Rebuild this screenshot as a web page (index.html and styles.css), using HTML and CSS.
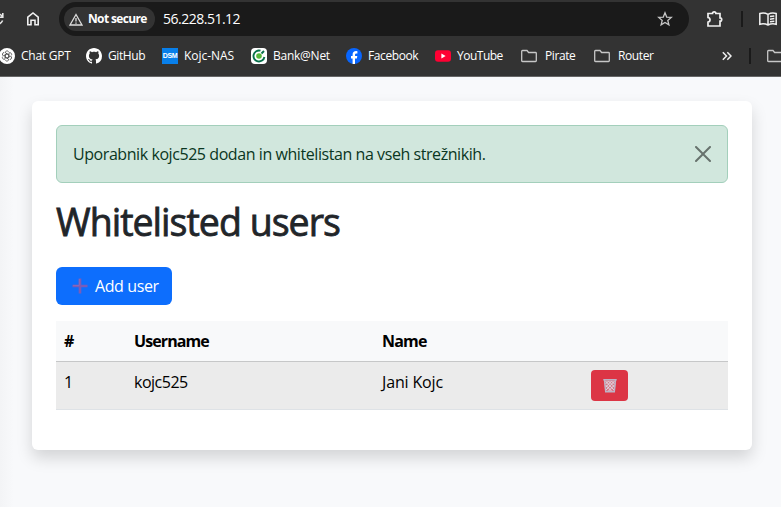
FILE: index.html
```html
<!DOCTYPE html>
<html lang="sl">
<head>
<meta charset="utf-8">
<title>Whitelisted users</title>
<link rel="stylesheet" href="styles.css">
</head>
<body>
<header class="browser">
  <div class="toolbar">
    <svg class="reload" width="6" height="16" viewBox="0 0 6 16" fill="none" stroke="#e8e8e8" stroke-width="1.6"><path d="M-2 3Q1 3 2.600 6M2.800 2v4.300H-1M2.600 9.500Q1 13 -2 13"/></svg>
    <svg class="home" width="14" height="16" viewBox="0 0 14 16" fill="none" stroke="#f0f0f0" stroke-width="1.6"><path d="M1.800 6.200L7 2l5.200 4.200v7.600H9V9.200H5v4.600H1.800z"/></svg>
    <div class="address">
      <div class="chip">
        <svg width="14" height="13" viewBox="0 0 14 13" fill="none" stroke="#dedede" stroke-width="1.3"><path d="M7 1.500L13 12H1z"/><path d="M7 5v3.500M7 9.500v1.300"/></svg>
        <span class="chip-label">Not secure</span>
      </div>
      <span class="url">56.228.51.12</span>
      <svg class="star" width="16" height="16" viewBox="0 0 16 16" fill="none" stroke="#c7c7c7" stroke-width="1.3"><path d="M8 1.800l1.700 4.300 4.600.3-3.500 3 1.100 4.500L8 11.400l-3.900 2.500 1.100-4.500-3.500-3 4.600-.3z"/></svg>
    </div>
    <svg class="puzzle" width="18" height="18" viewBox="0 0 18 18" fill="none" stroke="#f0f0f0" stroke-width="1.700"><path d="M2 3.500h4.500a1.700 1.700 0 0 1 3.400 0H14v4.300a1.700 1.700 0 0 1 0 3.400V16H2v-3.800c2.700-.4 2.700-4.300 0-4.700z"/></svg>
    <span class="divider"></span>
    <svg class="book" width="18" height="16" viewBox="0 0 18 16" fill="none" stroke="#f0f0f0" stroke-width="1.500"><path d="M9 3.300Q5 1 .8 2.500v10.800Q5 12 9 14q4-2 8.200-.7V2.500Q13 1 9 3.300zM9 3.300V14M11 5.600l4.300-.6M11 8.200l4.300-.6M11 10.800l4.300-.6"/></svg>
  </div>
  <nav class="bookmarks">
    <a class="bookmark"><svg width="16" height="16" viewBox="0 0 16 16"><circle cx="8" cy="8" r="8" fill="#fff"/><g fill="none" stroke="#333" stroke-width=".8" transform="translate(1.200 1.200) scale(.85)"><path id="k" d="M7.900 5.600L5.700 6.900v4.800a2.200 2.200 0 0 1-3-2.900"/><use href="#k" transform="rotate(60 8 8)"/><use href="#k" transform="rotate(120 8 8)"/><use href="#k" transform="rotate(180 8 8)"/><use href="#k" transform="rotate(240 8 8)"/><use href="#k" transform="rotate(300 8 8)"/></g></svg><span class="label chat">Chat GPT</span></a>
    <a class="bookmark"><svg width="16" height="16" viewBox="0 0 16 16" fill="#fff"><path d="M8 0C3.580 0 0 3.580 0 8c0 3.540 2.290 6.530 5.470 7.590.4.070.55-.17.55-.38 0-.19-.01-.82-.01-1.490-2.010.37-2.530-.49-2.690-.94-.09-.23-.48-.94-.82-1.130-.28-.15-.68-.52-.01-.53.63-.01 1.080.58 1.230.82.72 1.210 1.870.87 2.330.66.07-.52.28-.87.51-1.070-1.780-.2-3.640-.89-3.640-3.950 0-.87.31-1.590.82-2.150-.08-.2-.36-1.020.08-2.120 0 0 .67-.21 2.200.82.64-.18 1.320-.27 2-.27s1.360.09 2 .27c1.530-1.040 2.200-.82 2.200-.82.44 1.100.16 1.920.08 2.120.51.56.82 1.270.82 2.150 0 3.070-1.870 3.750-3.650 3.950.29.25.54.73.54 1.480 0 1.070-.01 1.930-.01 2.200 0 .21.15.46.55.38A8.010 8.010 0 0 0 16 8c0-4.420-3.580-8-8-8z"/></svg><span class="label git">GitHub</span></a>
    <a class="bookmark"><span class="dsm">DSM</span><span class="label nas">Kojc-NAS</span></a>
    <a class="bookmark"><svg width="16" height="16" viewBox="0 0 16 16" fill="none"><rect width="16" height="16" rx="4" fill="#fff"/><path d="M9.500 2.700A5.500 5.500 0 1 0 13.400 9" stroke="#07704a" stroke-width="1.900"/><circle cx="8" cy="8" r="2.800" fill="#56b83b"/><path d="M10.500 5.500l2.500-2.500" stroke="#07704a" stroke-width="2"/></svg><span class="label bank">Bank@Net</span></a>
    <a class="bookmark"><svg width="16" height="16" viewBox="0 0 16 16"><circle cx="8" cy="8" r="8" fill="#0866ff"/><path d="M6.600 16v-5.500H5V8h1.600V6.800c0-2.600 1.200-3.700 3.700-3.700l1.100.1v2.200h-.9c-1.200 0-1.500.5-1.500 1.500V8h2.300l-.4 2.500H9V16z" fill="#fff"/></svg><span class="label face">Facebook</span></a>
    <a class="bookmark"><svg width="16" height="16" viewBox="0 0 16 16"><rect y="2.300" width="16" height="11.400" rx="3" fill="#ff0033"/><path d="M6.400 5.600v4.800L10.600 8z" fill="#fff"/></svg><span class="label tube">YouTube</span></a>
    <a class="bookmark folder"><svg width="16" height="14" viewBox="0 0 16 14" fill="none" stroke="#c7c7c7" stroke-width="1.300"><path d="M.7 11V2.200Q.7 1.500 1.500 1.500H6l1.600 2h6.900q.8 0 .8.800V11.700q0 .8-.8.800H1.500q-.8 0-.8-.8z"/></svg><span class="label pirate">Pirate</span></a>
    <a class="bookmark folder"><svg width="16" height="14" viewBox="0 0 16 14" fill="none" stroke="#c7c7c7" stroke-width="1.300"><path d="M.7 11V2.200Q.7 1.500 1.500 1.500H6l1.600 2h6.900q.8 0 .8.800V11.700q0 .8-.8.800H1.500q-.8 0-.8-.8z"/></svg><span class="label router">Router</span></a>
    <svg class="more" width="10" height="10" viewBox="0 0 10 10" fill="none" stroke="#f0f0f0" stroke-width="1.500"><path d="M.8 1.200L4.500 5 .8 8.800M5.300 1.200L9 5 5.300 8.800"/></svg>
    <span class="divider low"></span>
    <svg class="all" width="16" height="14" viewBox="0 0 16 14" fill="none" stroke="#c7c7c7" stroke-width="1.300"><path d="M.7 11V2.200Q.7 1.500 1.500 1.500H6l1.600 2h6.900q.8 0 .8.800V11.700q0 .8-.8.800H1.500q-.8 0-.8-.8z"/></svg>
  </nav>
</header>
<main class="page">
  <section class="card">
    <div class="alert">
      <span class="alert-text">Uporabnik kojc525 dodan in whitelistan na vseh strežnikih.</span>
      <svg class="close" width="16" height="16" viewBox="0 0 16 16"><path d="M.293.293a1 1 0 0 1 1.414 0L8 6.586 14.293.293a1 1 0 1 1 1.414 1.414L9.414 8l6.293 6.293a1 1 0 0 1-1.414 1.414L8 9.414l-6.293 6.293a1 1 0 0 1-1.414-1.414L6.586 8 .293 1.707a1 1 0 0 1 0-1.414z"/></svg>
    </div>
    <h1><span class="title">Whitelisted users</span></h1>
    <button class="add"><svg width="16" height="16" viewBox="0 0 16 16"><path d="M8 .5v15M.5 8h15" stroke="#7a5cb8" stroke-width="2.600"/><path d="M7.300 1v6.400H1" fill="none" stroke="#956bb5" stroke-width=".8"/></svg><span class="add-text">Add user</span></button>
    <table>
      <colgroup><col class="c1"><col class="c2"><col class="c3"><col></colgroup>
      <thead><tr><th>#</th><th><span class="th-user">Username</span></th><th><span class="th-name">Name</span></th><th></th></tr></thead>
      <tbody><tr><td>1</td><td><span class="td-user">kojc525</span></td><td><span class="td-name">Jani Kojc</span></td><td><button class="delete" aria-label="Delete"><svg width="14" height="15" viewBox="0 0 14 15"><path d="M.8 1.500h12.400L11.700 14H2.300z" fill="#d6798a"/><path d="M2.500 3l8.500 9M5.500 3l6 6M8.500 3l3.500 3.500M2.500 7l6 6M11.500 3L3 12M8.500 3L2.800 9M5.500 3L2.500 6M11.500 7l-6 6" stroke="#dfe4ec" stroke-width=".9"/><path d="M.3 1.700h13.400M1.500 2l1.200 11.700h8.600L12.500 2" fill="none" stroke="#bdb4c6" stroke-width="1.400"/></svg></button></td></tr></tbody>
    </table>
  </section>
</main>
</body>
</html>
```
FILE: styles.css
```css
* { box-sizing: border-box; }
body {
  margin: 0;
  height: 507px;
  overflow: hidden;
  background: #f8f9fb;
  color: #212529;
  font: 16px/24px "Open Sans", "Noto Sans", sans-serif;
}
svg { display: block; flex: none; }
.browser {
  height: 77px;
  background: #333;
  border-bottom: 1px solid #666;
  color: #fff;
  font-size: 12px;
  line-height: 16px;
  overflow: hidden;
}
.toolbar { display: flex; align-items: center; height: 38px; }
.home { margin-left: 20px; }
.address {
  display: flex;
  flex: none;
  align-items: center;
  width: 630px;
  height: 34px;
  margin-left: 19px;
  padding: 0 16px 0 5px;
  border-radius: 17px;
  background: #1a1a1a;
}
.chip {
  display: flex;
  align-items: center;
  gap: 5px;
  width: 91px;
  height: 24px;
  padding-left: 5px;
  border-radius: 12px;
  background: #333;
}
.chip-label { font-weight: 700; letter-spacing: -0.65px; white-space: nowrap; }
.url { margin-left: 8px; font-size: 14px; letter-spacing: -0.5px; }
.star { margin-left: auto; }
.puzzle { margin-left: 17px; }
.divider { flex: none; width: 2px; height: 16px; margin-left: 17px; background: #1a1a1a; }
.book { margin-left: 16px; }
.bookmarks { display: flex; align-items: center; height: 36px; margin-left: -1px; }
.bookmark { display: flex; align-items: center; flex: none; gap: 6px; margin-right: 16px; }
.folder { gap: 8px; margin-right: 19px; }
.label { white-space: nowrap; letter-spacing: -0.4px; }
.chat { width: 49px; letter-spacing: -0.25px; }
.git { width: 38px; }
.nas { width: 51px; letter-spacing: -0.05px; }
.bank { width: 57px; letter-spacing: -0.25px; }
.face { width: 51px; }
.tube { width: 46px; margin-right: 2px; letter-spacing: -0.5px; }
.pirate { width: 30px; }
.router { width: 35px; }
.dsm {
  width: 16px;
  height: 16px;
  background: #087fea;
  font: 700 7px/16px "Liberation Sans", sans-serif;
  letter-spacing: -0.3px;
  text-align: center;
}
.more { margin-left: 50px; }
.low { margin-left: 17px; }
.all { margin-left: 16px; }
.page {
  height: 430px;
  padding: 24px 29px 0 32px;
  background: linear-gradient(to right, #f3f4f6, #f8f9fb 14px);
}
.card {
  height: 349px;
  padding: 24px;
  border-radius: 6px;
  background: #fff;
  box-shadow: 0 8px 16px rgba(0, 0, 0, .15);
}
.alert {
  display: flex;
  align-items: center;
  justify-content: space-between;
  height: 58px;
  padding: 0 16px;
  border: 1px solid #a3cfbb;
  border-radius: 6px;
  background: #d1e7dd;
  color: #0a3622;
}
.alert-text { letter-spacing: -0.43px; white-space: nowrap; }
.close { opacity: .5; }
h1 { margin: 15px 0 21px; font-size: 37.5px; font-weight: 500; line-height: 48px; }
.title { letter-spacing: -0.98px; white-space: nowrap; -webkit-text-stroke: 0.8px #212529; }
button { border: 0; color: #fff; font: inherit; }
.add {
  display: flex;
  align-items: center;
  gap: 7px;
  width: 116px;
  height: 38px;
  padding: 0 0 0 16px;
  border-radius: 6px;
  background: #0d6efd;
}
.add-text { letter-spacing: -0.4px; white-space: nowrap; }
table {
  width: 672px;
  margin-top: 16px;
  border-collapse: separate;
  border-spacing: 0;
  table-layout: fixed;
  color: #000;
}
.c1 { width: 70px; }
.c2 { width: 248px; }
.c3 { width: 209px; }
th, td { padding: 8px; text-align: left; vertical-align: top; }
th { height: 41px; background: #f8f9fa; border-bottom: 1px solid #c6c7c8; }
td { height: 48px; background: #ebebeb; border-bottom: 1px solid #dee2e6; }
.th-user { letter-spacing: -0.9px; }
.th-name { letter-spacing: -0.8px; }
.td-user { letter-spacing: -0.5px; }
.td-name { letter-spacing: -0.15px; }
.delete {
  display: flex;
  align-items: center;
  justify-content: center;
  width: 37px;
  height: 31px;
  padding: 0;
  border-radius: 4px;
  background: #dc3545;
}
```
